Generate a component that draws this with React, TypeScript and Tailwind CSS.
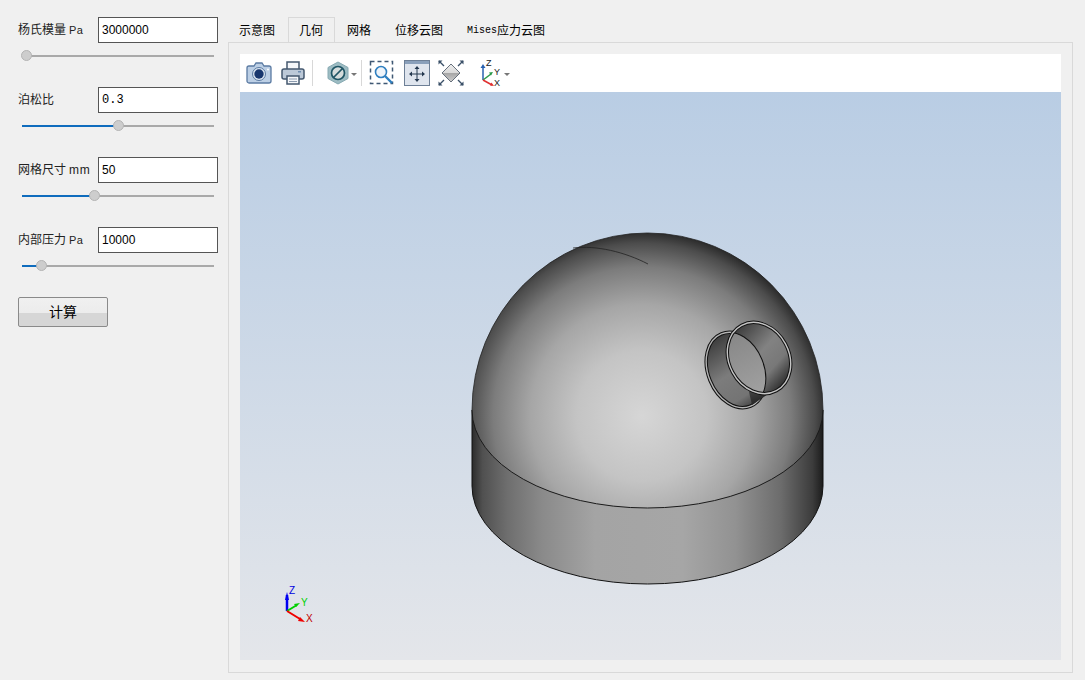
import React from 'react';

const CJK = "font-['Liberation_Sans','Noto_Sans_CJK_SC',sans-serif]";

const params = [
  { label: '杨氏模量', unit: 'Pa', value: '3000000', thumb: 5, mono: false },
  { label: '泊松比', unit: '', value: '0.3', thumb: 97, mono: true },
  { label: '网格尺寸', unit: 'mm', value: '50', thumb: 73, mono: false },
  { label: '内部压力', unit: 'Pa', value: '10000', thumb: 20, mono: false },
];

const Slider: React.FC<{ thumb: number }> = ({ thumb }) => (
  <div className="relative mt-[12px] ml-[4px] h-[2px] w-[192px] bg-[#a9a9a9]">
    <div className="h-full bg-[#0f6cbd]" style={{ width: thumb }} />
    <div
      className="absolute top-[-5px] h-[11px] w-[11px] rounded-full border border-[#b4b4b4] bg-[#cdcdcd]"
      style={{ left: thumb - 6 }}
    />
  </div>
);

const CameraIcon = () => (
  <svg width="26" height="24" viewBox="0 0 26 24">
    <path d="M3 5h5l2-3h6l2 3h5a2 2 0 0 1 2 2v13a2 2 0 0 1-2 2H3a2 2 0 0 1-2-2V7a2 2 0 0 1 2-2z" fill="#bccfe5" stroke="#5b7ba3" strokeWidth="1.300" />
    <circle cx="13" cy="13" r="6.500" fill="#dbe5f0" stroke="#5b7ba3" />
    <circle cx="13" cy="13" r="4.700" fill="#17366e" />
    <circle cx="22" cy="8.500" r="1" fill="#fff" />
  </svg>
);

const PrinterIcon = () => (
  <svg width="26" height="26" viewBox="0 0 26 26">
    <path d="M7 9V2h12v7" fill="#f4f6f9" stroke="#44586f" strokeWidth="1.500" />
    <rect x="2" y="9" width="22" height="10" rx="2" fill="#bcc9d8" stroke="#44586f" strokeWidth="1.500" />
    <rect x="18" y="11" width="3" height="1.500" fill="#6f8db0" />
    <rect x="7" y="16" width="12" height="8" fill="#f4f6f9" stroke="#44586f" strokeWidth="1.500" />
    <path d="M9 19h8M9 21.500h8" stroke="#8a9aae" />
  </svg>
);

const HexIcon = () => (
  <svg width="22" height="24" viewBox="0 0 22 24">
    <path d="M11 1l10 5.500v11L11 23 1 17.500v-11z" fill="#9dbcc3" stroke="#86a9b2" />
    <circle cx="11" cy="12" r="6.500" fill="#d5dcdc" stroke="#1f5565" strokeWidth="1.700" />
    <path d="M6.500 16.500l9-9" stroke="#1f5565" strokeWidth="1.700" />
  </svg>
);

const Caret = () => <div className="mt-[3px] h-0 w-0 border-x-[3px] border-t-[3px] border-x-transparent border-t-[#777]" />;

const ZoomBoxIcon = () => (
  <svg width="26" height="26" viewBox="0 0 26 26">
    <rect x="1.500" y="1.500" width="22" height="22" fill="none" stroke="#3f5874" strokeWidth="1.500" strokeDasharray="4 3" />
    <circle cx="12" cy="12" r="5.500" fill="#eef4fa" stroke="#2f7fc0" strokeWidth="1.600" />
    <path d="M16 16l7 7" stroke="#2f7fc0" strokeWidth="2.400" />
  </svg>
);

const PanIcon = () => (
  <svg width="26" height="26" viewBox="0 0 26 26">
    <rect x="0.500" y="0.500" width="25" height="25" fill="#dfe5ee" stroke="#6d7f96" />
    <rect x="1" y="1" width="24" height="3" fill="#8aa0bb" />
    <path d="M13 8v12M7 14h12" stroke="#24384f" />
    <path d="M13 6l-2.500 3h5zM13 22l-2.500-3h5zM5 14l3-2.500v5zM21 14l-3-2.500v5z" fill="#24384f" />
  </svg>
);

const FitIcon = () => (
  <svg width="26" height="26" viewBox="0 0 26 26">
    <defs>
      <linearGradient id="fit" x1="0" y1="0" x2="0" y2="1">
        <stop offset="0" stopColor="#eeeeee" />
        <stop offset="0.500" stopColor="#d8d8d8" />
        <stop offset="0.500" stopColor="#a5a5a5" />
        <stop offset="1" stopColor="#cfcfcf" />
      </linearGradient>
    </defs>
    <path d="M13 4l9 9-9 9-9-9z" fill="url(#fit)" stroke="#66707c" />
    <path d="M1 1l5 5M25 1l-5 5M1 25l5-5M25 25l-5-5" stroke="#3a5068" strokeWidth="1.400" />
    <path d="M0.500 0.500h4l-4 4zM25.500 0.500h-4l4 4zM0.500 25.500h4l-4-4zM25.500 25.500h-4l4-4z" fill="#3a5068" />
  </svg>
);

const AxesIcon = () => (
  <svg width="20" height="28" viewBox="0 0 20 28" className="overflow-visible">
    <path d="M2 21V8" stroke="#2a62b0" strokeWidth="1.500" />
    <path d="M2 5l-2.500 4h5z" fill="#2a62b0" />
    <path d="M2 21l8-6" stroke="#2a9a4a" strokeWidth="1.500" />
    <path d="M12 13l-4 .5 2 3z" fill="#2a9a4a" />
    <path d="M2 21l9 5" stroke="#e03030" strokeWidth="1.500" />
    <path d="M13 27l-4-.5 1.500-3z" fill="#e03030" />
    <text x="5" y="7" fontSize="9" fill="#222" fontFamily="Liberation Sans">Z</text>
    <text x="13" y="16" fontSize="9" fill="#222" fontFamily="Liberation Sans">Y</text>
    <text x="13" y="27" fontSize="9" fill="#222" fontFamily="Liberation Sans">X</text>
  </svg>
);

const Sep = () => <div className="h-[26px] w-px bg-[#d8d8d8]" />;

const base = { cx: 736, cy: 370, rx: 28, ry: 39, rot: 'rotate(-22 736 370)' };
const front = { cx: 759, cy: 358, rx: 30, ry: 37, rot: 'rotate(-28 759 358)' };

// dome model drawn in page coordinates
const Model = () => (
  <svg viewBox="240 92 821 568" className="absolute inset-0 h-full w-full">
    <defs>
      <linearGradient id="cyl" x1="0" y1="0" x2="1" y2="0">
        <stop offset="0" stopColor="#2c2c2c" />
        <stop offset="0.030" stopColor="#505050" />
        <stop offset="0.100" stopColor="#6e6e6e" />
        <stop offset="0.200" stopColor="#8a8a8a" />
        <stop offset="0.350" stopColor="#a4a4a4" />
        <stop offset="0.600" stopColor="#a6a6a6" />
        <stop offset="0.750" stopColor="#929292" />
        <stop offset="0.880" stopColor="#6c6c6c" />
        <stop offset="0.970" stopColor="#3c3c3c" />
        <stop offset="1" stopColor="#1c1c1c" />
      </linearGradient>
      <radialGradient id="dome" gradientUnits="userSpaceOnUse" cx="642" cy="416" r="186">
        <stop offset="0" stopColor="#d6d6d6" />
        <stop offset="0.350" stopColor="#c4c4c4" />
        <stop offset="0.600" stopColor="#a6a6a6" />
        <stop offset="0.800" stopColor="#7c7c7c" />
        <stop offset="0.930" stopColor="#4c4c4c" />
        <stop offset="1" stopColor="#262626" />
      </radialGradient>
      <linearGradient id="tube" gradientUnits="userSpaceOnUse" x1="730" y1="332" x2="745" y2="407">
        <stop offset="0" stopColor="#3c3c3c" />
        <stop offset="0.500" stopColor="#7c7c7c" />
        <stop offset="0.850" stopColor="#747474" />
        <stop offset="1" stopColor="#464646" />
      </linearGradient>
      <linearGradient id="neck" gradientUnits="userSpaceOnUse" x1="745" y1="325" x2="772" y2="400">
        <stop offset="0" stopColor="#3c3c3c" />
        <stop offset="0.700" stopColor="#555555" />
        <stop offset="1" stopColor="#222222" />
      </linearGradient>
      <linearGradient id="bore" gradientUnits="userSpaceOnUse" x1="748" y1="322" x2="775" y2="395">
        <stop offset="0" stopColor="#3a3a3a" />
        <stop offset="0.450" stopColor="#828282" />
        <stop offset="0.700" stopColor="#787878" />
        <stop offset="1" stopColor="#202020" />
      </linearGradient>
      <linearGradient id="hole" gradientUnits="userSpaceOnUse" x1="740" y1="330" x2="745" y2="400">
        <stop offset="0" stopColor="#858585" />
        <stop offset="1" stopColor="#a0a0a0" />
      </linearGradient>
      <clipPath id="frontClip">
        <ellipse cx={front.cx} cy={front.cy} rx={front.rx} ry={front.ry} transform={front.rot} />
      </clipPath>
    </defs>

    <path d="M472 410V486A175.500 98 0 0 0 823 486V410z" fill="url(#cyl)" stroke="#111" strokeWidth="1" />
    <path d="M472 410A175.500 177 0 0 1 823 410A175.500 98 0 0 1 472 410z" fill="url(#dome)" />
    <path d="M472 410A175.500 98 0 0 0 823 410" fill="none" stroke="#1a1a1a" strokeWidth="1" />
    <path d="M472 410A175.500 177 0 0 1 823 410" fill="none" stroke="#222" strokeWidth="0.800" />
    <path d="M573 248C596 245 625 252 648 264" fill="none" stroke="#222" strokeWidth="0.800" />

    {/* pipe stub */}
    <ellipse cx={base.cx} cy={base.cy} rx={base.rx} ry={base.ry} transform={base.rot} fill="url(#tube)" />
    <ellipse cx={base.cx} cy={base.cy} rx={base.rx} ry={base.ry} transform={base.rot} fill="none" stroke="#111" strokeWidth="3.400" />
    <ellipse cx={base.cx} cy={base.cy} rx={base.rx} ry={base.ry} transform={base.rot} fill="none" stroke="#b4b4b4" strokeWidth="1.400" />
    <path d="M735 331L750 325L782 385L771 392L752 405z" fill="url(#neck)" />
    <ellipse cx={front.cx} cy={front.cy} rx={front.rx} ry={front.ry} transform={front.rot} fill="url(#bore)" />
    <g clipPath="url(#frontClip)">
      <ellipse cx={base.cx} cy={base.cy} rx={base.rx} ry={base.ry} transform={base.rot} fill="url(#hole)" stroke="#111" strokeWidth="1" />
    </g>
    <ellipse cx={front.cx} cy={front.cy} rx={front.rx} ry={front.ry} transform={front.rot} fill="none" stroke="#111" strokeWidth="3.400" />
    <ellipse cx={front.cx} cy={front.cy} rx={front.rx} ry={front.ry} transform={front.rot} fill="none" stroke="#c4c4c4" strokeWidth="1.400" />

    {/* triad */}
    <path d="M287 611V595" stroke="#0000f0" strokeWidth="2.500" />
    <path d="M287 592l-2 8h4z" fill="#0000f0" />
    <path d="M287 611l10-6" stroke="#00d000" strokeWidth="2" />
    <path d="M300 603l-6 1 2 3z" fill="#00d000" />
    <path d="M287 611l13 8" stroke="#f00000" strokeWidth="2" />
    <path d="M305 622l-7-1 2-4z" fill="#f00000" />
    <text x="289" y="594" fontSize="10" fill="#0000e0" fontFamily="Liberation Sans">Z</text>
    <text x="301" y="606" fontSize="10" fill="#00d000" fontFamily="Liberation Sans">Y</text>
    <text x="306" y="622" fontSize="10" fill="#c00000" fontFamily="Liberation Sans">X</text>
  </svg>
);

const App: React.FC = () => (
  <div className={`flex h-[680px] w-[1085px] overflow-hidden bg-[#f0f0f0] text-[12px] text-black ${CJK}`}>
    <aside className="w-[228px] shrink-0 pt-[17px] pl-[18px]">
      {params.map((p) => (
        <div key={p.label} className="h-[70px]">
          <div className="flex h-[26px] items-center">
            <span className="w-[80px] shrink-0 text-[#222]">
              {p.label}
              {p.unit === 'Pa' && <span className="ml-[3px] text-[11px] tracking-[0.3px]">Pa</span>}
              {p.unit === 'mm' && <span className="ml-[3px] tracking-[0.8px]">mm</span>}
            </span>
            <div
              className={`flex h-[26px] w-[120px] items-center border border-[#555] bg-white px-[3px] ${
                p.mono ? "font-['Liberation_Mono',monospace]" : ''
              }`}
            >
              {p.value}
            </div>
          </div>
          <Slider thumb={p.thumb} />
        </div>
      ))}
      <button className="h-[30px] w-[90px] rounded-[2px] border border-[#8a8a8a] bg-[linear-gradient(#f0f0f0_0%,#ececec_52%,#d6d6d6_52%,#d6d6d6_100%)] text-[14px]">
        计算
      </button>
    </aside>

    <main className="flex flex-1 flex-col pt-[17px] pr-[12px] pb-[7px]">
      <div className="-ml-px flex h-[25px]">
        <div className="mr-px flex items-center border-x border-t border-transparent px-[11px] pt-px">示意图</div>
        <div className="flex items-center border-x border-t border-[#d9d9d9] bg-[#f0f0f0] pt-px pr-[11px] pl-[10px]">几何</div>
        <div className="flex items-center border-x border-t border-transparent px-[11px] pt-px">网格</div>
        <div className="flex items-center border-x border-t border-transparent px-[11px] pt-px">位移云图</div>
        <div className="flex items-center border-x border-t border-transparent px-[11px] pt-px">
          <span className="font-['Liberation_Mono',monospace] text-[10px]">Mises</span>应力云图
        </div>
      </div>
      <div className="flex flex-1 flex-col border border-[#d9d9d9] px-[11px] pt-[11px] pb-[12px]">
        <div className="flex h-[38px] items-center bg-white pl-[6px]">
          <CameraIcon />
          <div className="ml-[8px]"><PrinterIcon /></div>
          <div className="ml-[6px]"><Sep /></div>
          <div className="ml-[14px]"><HexIcon /></div>
          <div className="ml-[2px]"><Caret /></div>
          <div className="ml-[4px]"><Sep /></div>
          <div className="ml-[7px]"><ZoomBoxIcon /></div>
          <div className="ml-[9px]"><PanIcon /></div>
          <div className="ml-[8px]"><FitIcon /></div>
          <div className="ml-[17px]"><AxesIcon /></div>
          <div className="ml-[3px]"><Caret /></div>
        </div>
        <div className="relative flex-1 bg-[linear-gradient(#b9cde4,#e4e6ea)]">
          <Model />
        </div>
      </div>
    </main>
  </div>
);

export default App;
